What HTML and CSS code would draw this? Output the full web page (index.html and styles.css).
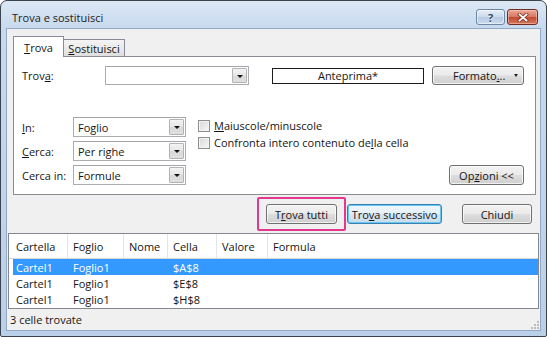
FILE: index.html
```html
<!DOCTYPE html>
<html lang="it">
<head>
    <meta charset="UTF-8">
    <meta name="viewport" content="width=device-width, initial-scale=1.0">
    <title>Trova e sostituisci</title>
    <link rel="stylesheet" href="styles.css">
</head>
<body>
    <div class="window">
        <div class="titlebar">
            <span class="title">Trova e sostituisci</span>
            <div class="caption-btns">
                <span class="cap-btn cap-help">?</span>
                <span class="cap-btn cap-close">
                    <svg class="x-icon" viewBox="0 0 12 9">
                        <path class="x-back" d="M2.5 1.5L9.5 7.5M9.5 1.5L2.5 7.5"></path>
                        <path class="x-front" d="M2.5 1.5L9.5 7.5M9.5 1.5L2.5 7.5"></path>
                    </svg>
                </span>
            </div>
        </div>

        <div class="client">
            <div class="tabs">
                <div class="tab tab-active"><span><u>T</u>rova</span></div>
                <div class="tab tab-idle"><span><u>S</u>ostituisci</span></div>
            </div>

            <div class="panel">
                <div class="find-row">
                    <label class="lbl-find">Trov<u>a</u>:</label>
                    <div class="combo combo-find"><span class="combo-arrow"></span></div>
                    <div class="preview">Anteprima*</div>
                    <button class="btn btn-format">Formato<u>.</u>..<span class="caret"></span></button>
                </div>

                <div class="opts">
                    <div class="opt-grid">
                        <label><u>I</u>n:</label>
                        <div class="combo">Foglio<span class="combo-arrow"></span></div>
                        <label><u>C</u>erca:</label>
                        <div class="combo">Per righe<span class="combo-arrow"></span></div>
                        <label>Cerca in:</label>
                        <div class="combo">Formule<span class="combo-arrow"></span></div>
                    </div>
                    <div class="checks">
                        <div class="check"><span class="box"></span><span><u>M</u>aiuscole/minuscole</span></div>
                        <div class="check"><span class="box"></span><span>Confronta intero contenuto de<u>l</u>la cella</span></div>
                    </div>
                    <button class="btn btn-options">Op<u>z</u>ioni &lt;&lt;</button>
                </div>
            </div>

            <div class="actions">
                <span class="highlight"><button class="btn btn-all">T<u>r</u>ova tutti</button></span>
                <button class="btn btn-next">Tro<u>v</u>a successivo</button>
                <button class="btn btn-close">Chiudi</button>
            </div>

            <div class="results">
                <div class="row row-head">
                    <span>Cartella</span><span>Foglio</span><span>Nome</span><span>Cella</span><span>Valore</span><span>Formula</span>
                </div>
                <div class="row row-selected">
                    <span>Cartel1</span><span>Foglio1</span><span></span><span>$A$8</span><span></span><span></span>
                </div>
                <div class="row">
                    <span>Cartel1</span><span>Foglio1</span><span></span><span>$E$8</span><span></span><span></span>
                </div>
                <div class="row">
                    <span>Cartel1</span><span>Foglio1</span><span></span><span>$H$8</span><span></span><span></span>
                </div>
            </div>

            <div class="statusbar">
                <span>3 celle trovate</span>
                <svg class="grip" viewBox="0 0 10 10">
                    <rect x="8" y="2" width="2" height="2"></rect>
                    <rect x="5" y="5" width="2" height="2"></rect>
                    <rect x="8" y="5" width="2" height="2"></rect>
                    <rect x="2" y="8" width="2" height="2"></rect>
                    <rect x="5" y="8" width="2" height="2"></rect>
                    <rect x="8" y="8" width="2" height="2"></rect>
                </svg>
            </div>
        </div>
    </div>
</body>
</html>
```
FILE: styles.css
```css
* {
    box-sizing: border-box;
}
body {
    margin: 0;
    font-family: 'Open Sans', 'Liberation Sans', Arial, sans-serif;
    font-size: 11px;
    color: #151515;
    background: #fff;
}
u {
    text-decoration: underline;
    text-underline-offset: 1px;
}

/* window frame */
.window {
    width: 547px;
    height: 337px;
    border: 1px solid #3b4350;
    border-radius: 7px 7px 2px 2px;
    padding: 0 6px 6px;
    display: flex;
    flex-direction: column;
    background: linear-gradient(#dce7f4, #c7d9ee 28px, #bad0e9);
}
.titlebar {
    height: 28px;
    display: flex;
    align-items: flex-start;
    padding: 0 2px 0 5px;
}
.title {
    margin-top: 9px;
    line-height: 16px;
    color: #1b1b1b;
}
.caption-btns {
    margin-left: auto;
    margin-top: 8px;
    display: flex;
    gap: 2px;
}
.cap-btn {
    height: 16px;
    border-radius: 3px;
    display: flex;
    align-items: center;
    justify-content: center;
}
.cap-help {
    width: 29px;
    border: 1px solid #6f86a3;
    background: linear-gradient(#e6eef8, #cbdaec 50%, #b6cae2 51%, #c9dbee);
    box-shadow: inset 0 0 0 1px rgba(255, 255, 255, 0.5);
    color: #34475e;
    font-weight: 700;
    font-size: 11px;
    text-shadow: 0 1px 0 #fff;
}
.cap-close {
    width: 31px;
    border: 1px solid #6e2c22;
    background: linear-gradient(#eaa797, #d97761 50%, #c24a30 51%, #d7775a);
    box-shadow: inset 0 0 0 1px rgba(255, 220, 210, 0.45);
}
.x-icon {
    width: 12px;
    height: 9px;
    fill: none;
    stroke-linecap: square;
}
.x-back {
    stroke: #7b3427;
    stroke-width: 3.4;
}
.x-front {
    stroke: #fff;
    stroke-width: 1.8;
}

/* client area */
.client {
    flex: 1;
    background: #f0f0f0;
    box-shadow: 0 0 0 1px #92a9c5;
    display: flex;
    flex-direction: column;
    padding-top: 7px;
}
.tabs {
    display: flex;
    align-items: flex-end;
    height: 21px;
    margin: 0 0 -1px 6px;
    position: relative;
    z-index: 1;
}
.tab {
    display: flex;
    align-items: center;
    justify-content: center;
    border: 1px solid #898c95;
    border-bottom: none;
}
.tab-active {
    width: 51px;
    height: 21px;
    background: #fff;
    position: relative;
    z-index: 2;
    padding-top: 1px;
}
.tab-idle {
    width: 62px;
    height: 17px;
    margin: 0 0 1px -1px;
    background: linear-gradient(#f4f4f4, #ebebeb 50%, #dedede);
    padding-top: 1px;
}
.panel {
    height: 139px;
    margin: 0 4px 0 6px;
    border: 1px solid #898c95;
    background: #fff;
    padding: 9px 11px 9px 8px;
}
.find-row {
    display: flex;
    align-items: center;
    height: 19px;
}
.lbl-find {
    width: 83px;
}
.combo {
    height: 20px;
    border: 1px solid #abadb3;
    border-top-color: #a3a5ab;
    background: #fff;
    display: flex;
    align-items: center;
    padding: 0 1px 0 4px;
}
.combo-find {
    width: 144px;
    height: 19px;
}
.combo-arrow {
    margin-left: auto;
    width: 15px;
    height: 16px;
    border: 1px solid #b3b3b3;
    border-radius: 1px;
    background: linear-gradient(#f3f3f3, #e6e6e6 50%, #d8d8d8 51%, #e0e0e0);
    display: flex;
    align-items: center;
    justify-content: center;
}
.combo-find .combo-arrow {
    height: 15px;
}
.combo-arrow::after {
    content: "";
    border-left: 3px solid transparent;
    border-right: 3px solid transparent;
    border-top: 3px solid #111;
    margin-top: 1px;
}
.preview {
    width: 152px;
    height: 16px;
    margin-left: 23px;
    border: 1px solid #1c1c1c;
    text-align: center;
    line-height: 14px;
}

/* buttons */
.btn {
    font: inherit;
    color: inherit;
    height: 20px;
    padding: 0;
    border: 1px solid #707070;
    border-radius: 3px;
    background: linear-gradient(#f2f2f2, #ebebeb 48%, #dddddd 52%, #cfcfcf);
    box-shadow: inset 0 0 0 1px rgba(255, 255, 255, 0.7);
    display: flex;
    align-items: center;
    justify-content: center;
}
.btn-format {
    width: 92px;
    height: 19px;
    margin-left: 8px;
    padding: 0 5px 0 20px;
    justify-content: flex-start;
}
.caret {
    margin-left: auto;
    border-left: 2.5px solid transparent;
    border-right: 2.5px solid transparent;
    border-top: 3px solid #222;
}
.opts {
    display: flex;
    align-items: flex-end;
    margin-top: 32px;
}
.opt-grid {
    display: grid;
    grid-template-columns: 51px 113px;
    row-gap: 4px;
    align-items: center;
}
.checks {
    margin-left: 12px;
    align-self: flex-start;
}
.check {
    display: flex;
    align-items: center;
    height: 17px;
}
.box {
    width: 12px;
    height: 12px;
    margin-right: 4px;
    border: 1px solid #8e8f8f;
    background: linear-gradient(135deg, #d8d8d8, #f8f8f8);
    box-shadow: inset 0 0 0 1px #f3f3f3;
}
.btn-options {
    margin-left: auto;
    width: 75px;
}
.actions {
    display: flex;
    justify-content: flex-end;
    align-items: center;
    margin-top: 2px;
    padding-right: 8px;
}
.highlight {
    border: 2px solid #e2398c;
    border-radius: 2px;
    padding: 5px 7px;
}
.btn-all {
    width: 71px;
}
.btn-next {
    width: 95px;
    margin-left: 1px;
    border-color: #3c7fb1;
    background: linear-gradient(#f2f7fb, #e5eff7 48%, #d6e5f1 52%, #cadbea);
    box-shadow: inset 0 0 0 1px #63c8f1;
}
.btn-close {
    width: 70px;
    margin-left: 20px;
}

/* results list */
.results {
    margin: 2px 1px 0;
    height: 76px;
    border: 1px solid #828790;
    background: #fff;
    overflow: hidden;
}
.row {
    display: grid;
    grid-template-columns: 59px 56px 44px 49px 51px 1fr;
    height: 16px;
    align-items: center;
    white-space: nowrap;
}
.row span {
    padding-left: 5px;
}
.row span:first-child {
    padding-left: 7px;
}
.row-head {
    height: 25px;
    border-bottom: 1px solid #d5d5d5;
    align-items: stretch;
}
.row-head span {
    display: flex;
    align-items: center;
    border-right: 1px solid #e5e5e5;
}
.row-head span:last-child {
    border-right: none;
}
.row-selected {
    background: linear-gradient(to right, transparent 4px, #3399ff 4px);
    color: #fff;
}
.statusbar {
    flex: 1;
    display: flex;
    align-items: center;
    padding-left: 3px;
}
.grip {
    margin-left: auto;
    align-self: flex-end;
    width: 10px;
    height: 10px;
    margin: 0 1px 1px auto;
    fill: #b9bcc0;
}
```
